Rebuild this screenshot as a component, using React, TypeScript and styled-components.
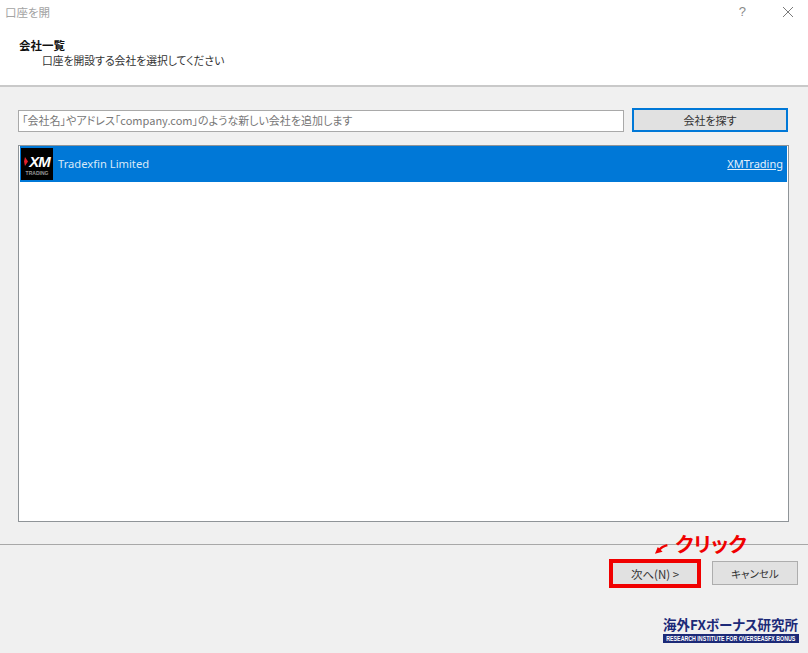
import React from "react";
import styled, { createGlobalStyle } from "styled-components";

const Global = createGlobalStyle`
  html, body { margin: 0; padding: 0; background: #f0f0f0; }
  body { font-family: "Noto Sans CJK JP", "Noto Sans", sans-serif; font-feature-settings: "palt"; }
`;
const Dialog = styled.div`
  position: relative;
  width: 808px;
  height: 653px;
  overflow: hidden;
  display: flex;
  flex-direction: column;
  background: #f0f0f0;
  font-size: 11px;
  color: #222;
`;
const Header = styled.header`
  height: 85px;
  flex: none;
  background: #fff;
  border-bottom: 2px solid #c9c9c9;
`;
const TitleBar = styled.div`
  height: 24px;
  display: flex;
  align-items: center;
  padding: 0 14px 1px 5px;
  box-sizing: border-box;
  color: #a3a3a3;
  font-size: 11.5px;
`;
const TitleText = styled.span`
  flex: 1;
`;
const HelpMark = styled.span`
  font-family: "Liberation Sans", sans-serif;
  font-size: 13px;
  color: #8a8a8a;
  margin-right: 36px;
`;
const Heading = styled.div`
  margin: 13px 0 0 19px;
  font-weight: 700;
  font-size: 11.5px;
  line-height: 16px;
  color: #111;
`;
const SubHeading = styled.div`
  margin-left: 42px;
  font-size: 10.8px;
  line-height: 15px;
  color: #333;
`;
const Content = styled.main`
  flex: 1;
  display: flex;
  flex-direction: column;
  padding: 21px 18px 0 18px;
  gap: 13px;
  min-height: 0;
`;
const SearchRow = styled.div`
  display: flex;
  gap: 8px;
  align-items: flex-end;
  height: 24px;
  padding-right: 2px;
`;
const SearchInput = styled.div`
  flex: 1;
  height: 22px;
  box-sizing: border-box;
  background: #fff;
  border: 1px solid #a9a9a9;
  color: #777;
  font-size: 11px;
  line-height: 19px;
  padding-left: 3px;
  white-space: nowrap;
  overflow: hidden;
`;
const FindButton = styled.button`
  width: 156px;
  height: 24px;
  box-sizing: border-box;
  background: #e1e1e1;
  border: 2px solid #0078d7;
  font: inherit;
  font-feature-settings: "palt";
  color: #333;
  padding: 0;
`;
const List = styled.section`
  width: 771px;
  height: 377px;
  box-sizing: border-box;
  background: #fff;
  border: 1px solid #8f9498;
  padding: 0 1px 1px;
`;
const Row = styled.div`
  height: 36px;
  background: #0078d7;
  display: flex;
  align-items: center;
  padding: 0 4px 0 1px;
  color: #fff;
`;
const Logo = styled.div`
  position: relative;
  width: 32px;
  height: 32px;
  background: #000;
  color: #fff;
  display: flex;
  flex-direction: column;
  align-items: center;
  justify-content: center;
  flex: none;
`;
const LogoMark = styled.span`
  font: italic 700 15px/17px "Liberation Sans", sans-serif;
  letter-spacing: -1px;
  padding-left: 5px;
`;
const LogoSub = styled.span`
  font: 700 5px/6px "Liberation Sans", sans-serif;
  color: #999;
`;
const LogoChevron = styled.svg`
  position: absolute;
  left: 3px;
  top: 9px;
`;
const CompanyName = styled.span`
  flex: 1;
  margin: 0 0 1px 5px;
  font-family: "Noto Sans", sans-serif;
  font-size: 11.2px;
  color: #d8e9f8;
`;
const CompanyLink = styled.a`
  margin-bottom: 1px;
  font-family: "Noto Sans", sans-serif;
  font-size: 11px;
  color: #e4f0fb;
  text-decoration: underline;
`;
const Footer = styled.footer`
  position: absolute;
  left: 0;
  right: 0;
  top: 544px;
  height: 109px;
  border-top: 1px solid #a8a8a8;
  box-sizing: border-box;
  display: flex;
  justify-content: flex-end;
  align-items: flex-start;
  gap: 11px;
  padding: 14px 10px 0 0;
`;
const FooterButton = styled.button<{ $primary?: boolean }>`
  width: ${(p) => (p.$primary ? "92px" : "86px")};
  height: ${(p) => (p.$primary ? "29px" : "24px")};
  margin-top: ${(p) => (p.$primary ? "0" : "2px")};
  box-sizing: border-box;
  background: #e1e1e1;
  border: ${(p) => (p.$primary ? "4px solid #f00000" : "1px solid #adadad")};
  font: inherit;
  font-feature-settings: "palt";
  font-size: ${(p) => (p.$primary ? "11.5px" : "10.5px")};
  color: #333;
  padding: 0;
`;
const Annotation = styled.div`
  position: absolute;
  left: 654px;
  top: 530px;
  display: flex;
  align-items: center;
  color: #f00000;
  font-weight: 700;
  font-size: 20.5px;
  line-height: 26px;
`;
const Watermark = styled.div`
  position: absolute;
  left: 663px;
  top: 616px;
  width: 136px;
  display: flex;
  flex-direction: column;
  align-items: stretch;
`;
const WatermarkTitle = styled.div`
  color: #1c2a78;
  font-weight: 700;
  font-size: 13.5px;
  line-height: 17px;
  white-space: nowrap;
`;
const WatermarkBar = styled.div`
  background: #1c2a78;
  height: 9px;
  margin-top: 1px;
  display: flex;
  justify-content: center;
`;
const WatermarkBarText = styled.span`
  flex: none;
  color: #fff;
  font: 700 8px/9px "Liberation Sans", sans-serif;
  white-space: nowrap;
  transform: scaleX(0.66);
`;

export default function App() {
  return (
    <>
      <Global />
      <Dialog>
        <Header>
          <TitleBar>
            <TitleText>口座を開</TitleText>
            <HelpMark>?</HelpMark>
            <svg width="12" height="12" viewBox="0 0 12 12" fill="none" stroke="#7a7a7a" strokeWidth="1">
              <path d="M1 1l10 10M11 1L1 11" />
            </svg>
          </TitleBar>
          <Heading>会社一覧</Heading>
          <SubHeading>口座を開設する会社を選択してください</SubHeading>
        </Header>
        <Content>
          <SearchRow>
            <SearchInput>「会社名」やアドレス「company.com」のような新しい会社を追加します</SearchInput>
            <FindButton>会社を探す</FindButton>
          </SearchRow>
          <List>
            <Row>
              <Logo>
                <LogoChevron width="5" height="9" viewBox="0 0 5 9">
                  <path d="M1 0L4 4.5 1 9 0 4.5z" fill="#e0202a" />
                </LogoChevron>
                <LogoMark>XM</LogoMark>
                <LogoSub>TRADING</LogoSub>
              </Logo>
              <CompanyName>Tradexfin Limited</CompanyName>
              <CompanyLink>XMTrading</CompanyLink>
            </Row>
          </List>
        </Content>
        <Footer>
          <FooterButton $primary>次へ(N) &gt;</FooterButton>
          <FooterButton>キャンセル</FooterButton>
        </Footer>
        <Annotation>
          <svg width="21" height="16" viewBox="0 0 22 16" style={{ marginTop: 8 }}>
            <path d="M14 6C10 7 7 9 5.5 11" stroke="#f00000" strokeWidth="2.4" fill="none" />
            <path d="M1 15l8-2-5-5z" fill="#f00000" />
          </svg>
          クリック
        </Annotation>
        <Watermark>
          <WatermarkTitle>海外FXボーナス研究所</WatermarkTitle>
          <WatermarkBar>
            <WatermarkBarText>RESEARCH INSTITUTE FOR OVERSEASFX BONUS</WatermarkBarText>
          </WatermarkBar>
        </Watermark>
      </Dialog>
    </>
  );
}
